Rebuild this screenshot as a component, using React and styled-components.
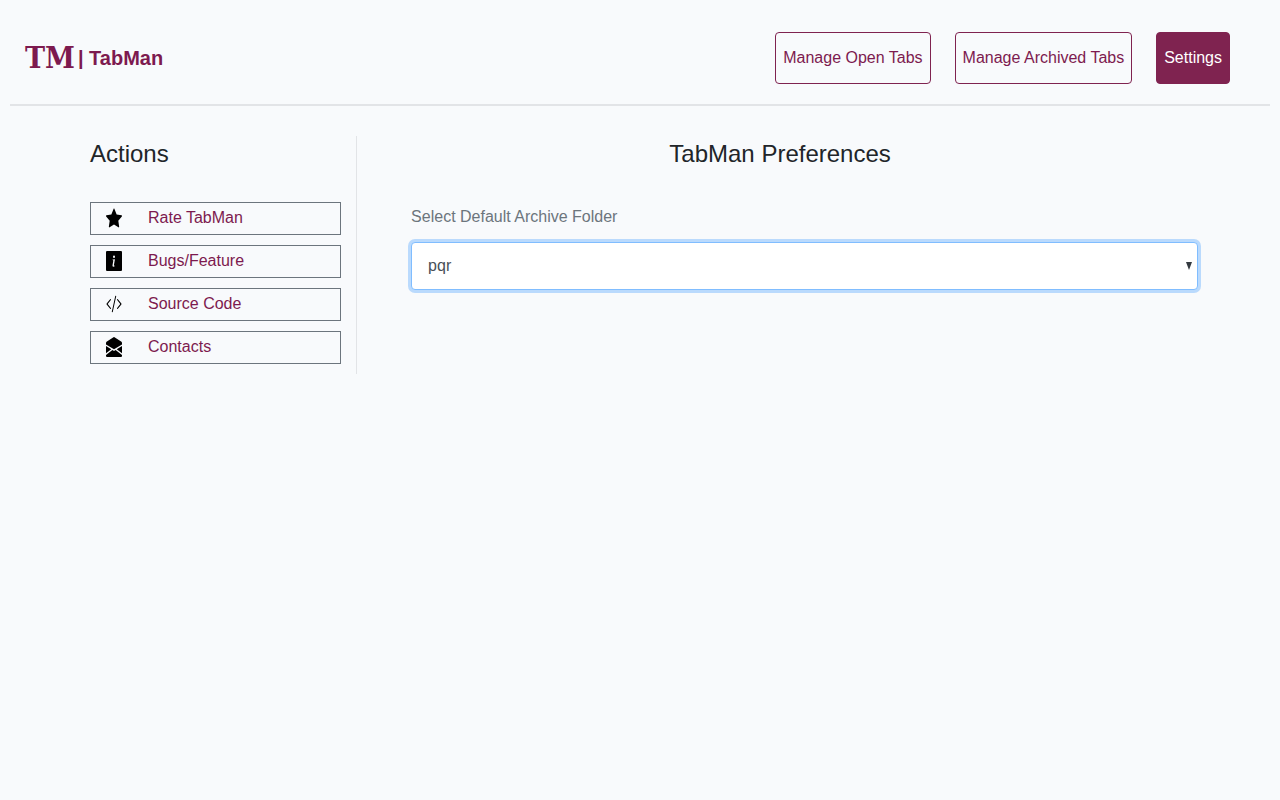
import React, { useState } from 'react';
import styled, { createGlobalStyle } from 'styled-components';

const PLUM = '#7f2350';
const LINK = '#7d1a4f';
const BACKGROUND = '#f8fafc';
const DARK = '#212529';
const GRAY = '#6c757d';
const RULE = '#e2e4e7';

const GlobalStyle = createGlobalStyle`
	* {
		box-sizing: border-box;
	}

	body {
		margin: 0;
		background: ${BACKGROUND};
		color: ${DARK};
		font-family: "Liberation Sans", Arial, sans-serif;
		font-size: 16px;
		line-height: 30px;
	}
`;

const Navbar = styled.header`
	display: flex;
	justify-content: space-between;
	align-items: center;
	margin: 0 10px;
	padding: 32px 40px 20px 15px;
	border-bottom: 2px solid ${RULE};
`;

const Brand = styled.a`
	display: flex;
	align-items: center;
	gap: 3px;
	color: ${LINK};
	font-size: 20px;
	font-weight: bold;
	text-decoration: none;
`;

const Logo = styled.span`
	font-family: "DejaVu Serif Condensed", "DejaVu Serif", serif;
	font-size: 30px;
	font-weight: bold;
`;

const Nav = styled.nav`
	display: flex;
	gap: 24px;
`;

const NavButton = styled.button`
	height: 52px;
	padding: 0 7px;
	border: 1px solid ${PLUM};
	border-radius: 4px;
	background: ${({ $active }) => ($active ? PLUM : 'transparent')};
	color: ${({ $active }) => ($active ? '#fff' : LINK)};
	font: inherit;
	cursor: pointer;
`;

const Page = styled.main`
	display: grid;
	grid-template-columns: 24fr 76fr;
	padding: 30px 77px 0 90px;
`;

const Sidebar = styled.aside`
	padding: 0 15px 10px 0;
	border-right: 1px solid ${RULE};
`;

const Title = styled.h1`
	margin: 0 0 30px;
	font-size: 24px;
	font-weight: normal;
	line-height: 36px;
	text-align: ${({ $center }) => ($center ? 'center' : 'left')};
`;

const ActionList = styled.div`
	display: flex;
	flex-direction: column;
	gap: 10px;
`;

const Action = styled.a`
	display: flex;
	align-items: center;
	gap: 26px;
	height: 33px;
	padding: 0 15px 2px;
	border: 1px solid ${GRAY};
	color: ${LINK};
	text-decoration: none;
`;

const Icon = styled.svg`
	width: 16px;
	height: 20px;
	fill: #000;
`;

const Field = styled.div`
	display: flex;
	flex-direction: column;
	gap: 10px;
	padding: 0 5px 0 54px;
`;

const Label = styled.label`
	color: ${GRAY};
`;

const SelectBox = styled.div`
	position: relative;
`;

const Select = styled.select`
	appearance: none;
	display: block;
	width: 100%;
	height: 48px;
	padding: 0 16px;
	border: 1px solid #80bdff;
	border-radius: 4px;
	outline: none;
	background: #fff;
	box-shadow: 0 0 0 3px rgba(0, 123, 255, 0.25);
	color: #495057;
	font: inherit;
`;

const Arrow = styled.svg`
	position: absolute;
	top: 20px;
	right: 6px;
	width: 6px;
	height: 8px;
	fill: #343a40;
	pointer-events: none;
`;

const pages = ['Manage Open Tabs', 'Manage Archived Tabs', 'Settings'];

const actions = [
	{
		label: 'Rate TabMan',
		icon: <path d="M3.612 15.443c-.386.198-.824-.149-.746-.592l.83-4.73L.173 6.765c-.329-.314-.158-.888.283-.95l4.898-.696L7.538.792c.197-.39.73-.39.927 0l2.184 4.327 4.898.696c.441.062.612.636.283.95l-3.523 3.356.83 4.73c.078.443-.36.79-.746.592L8 13.187l-4.389 2.256z" />,
	},
	{
		label: 'Bugs/Feature',
		icon: <path d="M0 1a1 1 0 0 1 1-1h14a1 1 0 0 1 1 1v14a1 1 0 0 1-1 1H1a1 1 0 0 1-1-1V1zm8.93 5.588l-2.29.287-.082.38.45.083c.294.07.352.176.288.469l-.738 3.468c-.194.897.105 1.319.808 1.319.545 0 1.178-.252 1.465-.598l.088-.416c-.2.176-.492.246-.686.246-.275 0-.375-.193-.304-.533L8.93 6.588zM8 5.5a1 1 0 1 0 0-2 1 1 0 0 0 0 2z" />,
	},
	{
		label: 'Source Code',
		icon: <path d="M4.854 4.146a.5.5 0 0 1 0 .708L1.707 8l3.147 3.146a.5.5 0 0 1-.708.708l-3.5-3.5a.5.5 0 0 1 0-.708l3.5-3.5a.5.5 0 0 1 .708 0zm6.292 0a.5.5 0 0 0 0 .708L14.293 8l-3.147 3.146a.5.5 0 0 0 .708.708l3.5-3.5a.5.5 0 0 0 0-.708l-3.5-3.5a.5.5 0 0 0-.708 0zM9.3 1.3l.95.28-3.55 13.1-.95-.28z" />,
	},
	{
		label: 'Contacts',
		icon: <path d="M7.5.2a1 1 0 0 1 1 0L15.5 3.8l.5.8V6L8 9.7 0 6V4.6l.5-.8zM0 7.2l5.3 2.6L0 13zM16 7.2l-5.3 2.6L16 13zM0 14.3L6.4 10.4 8 11.2l1.6-.8L16 14.3V15a1 1 0 0 1-1 1H1a1 1 0 0 1-1-1z" />,
	},
];

const App = () => {
	const [page, setPage] = useState('Settings');
	const [folder, setFolder] = useState('pqr');

	return (
		<>
			<GlobalStyle />
			<Navbar>
				<Brand href="#">
					<Logo>TM</Logo>
					<span>| TabMan</span>
				</Brand>
				<Nav>
					{pages.map(name => (
						<NavButton key={name} type="button" $active={name === page} onClick={() => setPage(name)}>{name}</NavButton>
					))}
				</Nav>
			</Navbar>
			<Page>
				<Sidebar>
					<Title>Actions</Title>
					<ActionList>
						{actions.map(({ label, icon }) => (
							<Action href="#" key={label}>
								<Icon viewBox="0 0 16 16" preserveAspectRatio="none" aria-hidden="true">{icon}</Icon>
								{label}
							</Action>
						))}
					</ActionList>
				</Sidebar>
				<section>
					<Title $center>TabMan Preferences</Title>
					<Field>
						<Label htmlFor="folder">Select Default Archive Folder</Label>
						<SelectBox>
							<Select id="folder" value={folder} onChange={e => setFolder(e.target.value)}>
								<option value="pqr">pqr</option>
							</Select>
							<Arrow viewBox="0 0 6 8" aria-hidden="true"><path d="M0 0h6L3 8z" /></Arrow>
						</SelectBox>
					</Field>
				</section>
			</Page>
		</>
	);
};

export default App;
